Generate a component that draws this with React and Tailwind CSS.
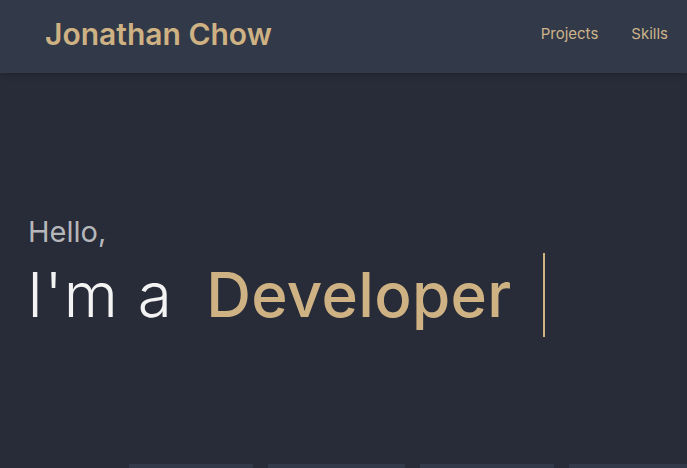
import React from "react";

const Navbar = () => (
  <nav className="h-[73px] bg-[#323949] flex items-center justify-between pl-[45px] pr-[19px] pb-[4px] shadow-md">
    <span className="text-[30px] font-semibold text-[#cfb283]">Jonathan Chow</span>
    <div className="flex items-center gap-[33px] text-[15px] text-[#cdb48a]">
      <span>Projects</span>
      <span>Skills</span>
    </div>
  </nav>
);

const Hero = () => (
  <section className="px-[29px] pt-[144px] h-[391px]">
    <p className="text-[29px] leading-none text-[#b6b7bb] -ml-[1px]">Hello,</p>
    <div className="flex items-center mt-[7px] h-[84px]">
      <span className="text-[62px] font-light text-[#f3f3f3] leading-none tracking-[0.02em] -ml-[2px]">I'm a</span>
      <span className="text-[62px] font-medium text-[#cfb283] leading-none ml-[33px] tracking-[0.005em]">Developer</span>
      <span className="w-[2px] h-[84px] bg-[#cfb283] ml-[31px]"></span>
    </div>
  </section>
);

const Cards = () => (
  <div className="flex pl-[129px] gap-[15px] items-end h-[4px] overflow-hidden">
    {[124, 137, 134, 140].map((w, i) => (
      <div key={i} style={{ width: w }} className="h-[10px] shrink-0 rounded-t-[6px] bg-[#323949]"></div>
    ))}
  </div>
);

export default function App() {
  return (
    <div className="w-[687px] h-[468px] overflow-hidden bg-[#282c38]" style={{ fontFamily: "Inter, 'Liberation Sans', sans-serif" }}>
      <Navbar />
      <Hero />
      <Cards />
    </div>
  );
}
